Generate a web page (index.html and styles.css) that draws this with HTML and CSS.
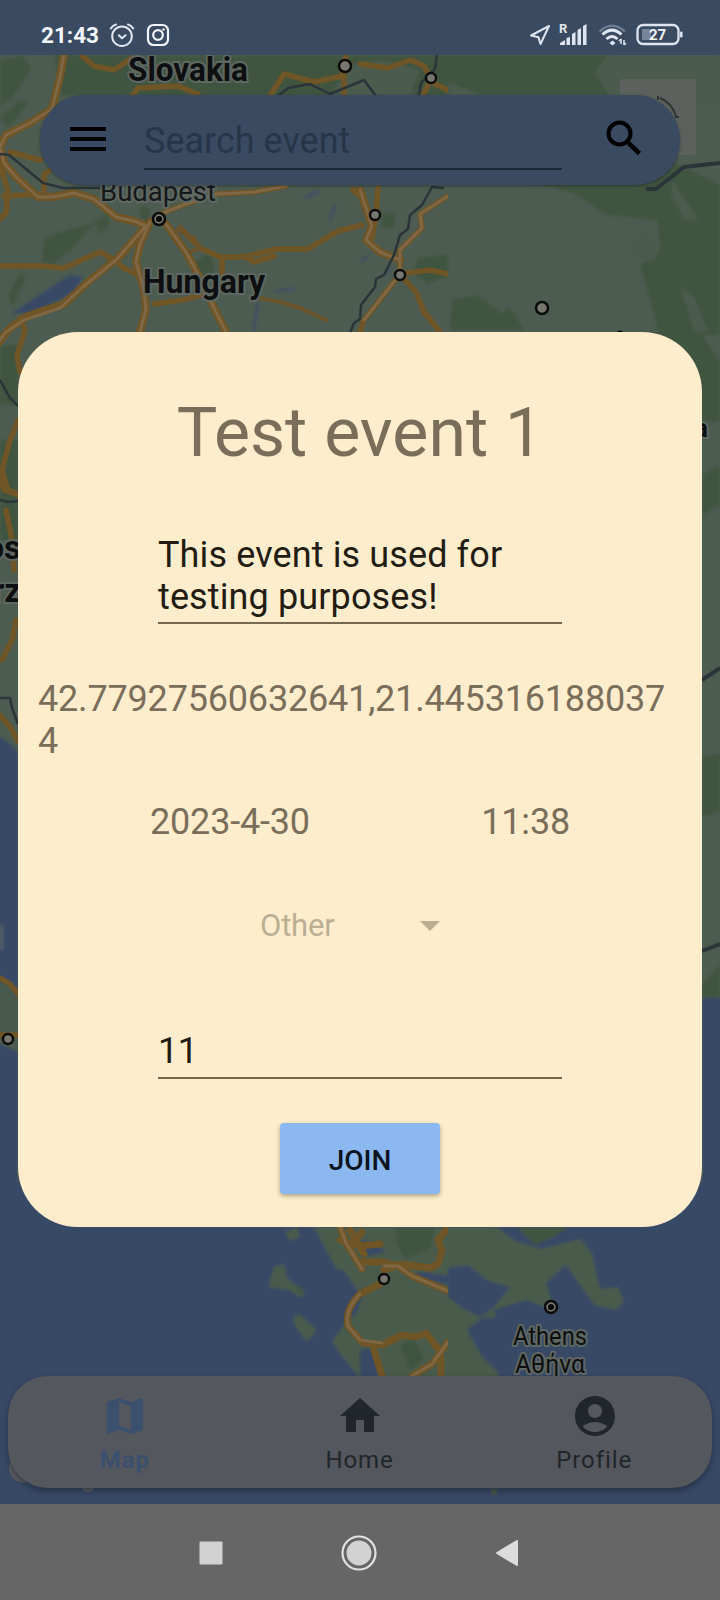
FILE: index.html
```html
<!DOCTYPE html>
<html lang="en">
<head>
<meta charset="utf-8">
<title>Event</title>
<link rel="stylesheet" href="styles.css">
</head>
<body>
<div class="screen">
  <header class="status">
    <span class="clock">21:43</span>
    <svg class="ic-alarm" width="26" height="26" viewBox="0 0 26 26" fill="none" stroke="#dfe5f0" stroke-width="2" stroke-linecap="round" stroke-linejoin="round"><circle cx="13" cy="14.2" r="9.8"/><path d="M9.8 13.2l3.2 3 3.6-3"/><path d="M1.8 6.5Q3.5 3.5 7 2.5M24.2 6.5Q22.500 3.500 19 2.500"/></svg>
    <svg class="ic-insta" width="24" height="24" viewBox="0 0 24 24" fill="none" stroke="#f1f4fa" stroke-width="2.200"><rect x="2" y="2" width="20" height="20" rx="5.500"/><circle cx="12" cy="12" r="4.800"/><circle cx="17.500" cy="6.500" r="1.200" fill="#f1f4fa" stroke="none"/></svg>
    <span class="spacer"></span>
    <svg class="ic-loc" width="22" height="22" viewBox="0 0 22 22" fill="none" stroke="#dfe5f0" stroke-width="2" stroke-linejoin="round"><path d="M20 2L2 11.500l7.500 1.700L11.500 20z"/></svg>
    <svg class="ic-signal" width="29" height="23" viewBox="0 0 29 23"><text x="0" y="10" class="roam">R</text><path fill="#dfe5f0" d="M1 22v-2l5-3v5zM7.500 22v-7l3.500-1v8zM13 22V11l3.500-2v13zM18.500 22V7l3.500-2v17zM24 22V3l3.500-2v21z"/></svg>
    <svg class="ic-wifi" width="29" height="24" viewBox="0 0 29 24" fill="none" stroke="#dfe5f0" stroke-width="3"><path d="M1.500 8.500Q14 -3 27 8.500" stroke="#6e7c93" stroke-width="2.500"/><path d="M4.500 11.500Q14 2.800 23.500 11.500M8.500 16Q14 11 19.500 16"/><path d="M14.500 17.500l3 2.500-3 2.500-3-2.500z" fill="#dfe5f0" stroke="none"/><path d="M23 16v5M26 17v5" stroke-width="1.500"/><path d="M21 18l2-2M26 22l2-2" stroke-width="1.500"/></svg>
    <svg class="ic-batt" width="47" height="23" viewBox="0 0 47 23"><rect x="1.500" y="2" width="41" height="19" rx="5.500" fill="none" stroke="#dfe5f0" stroke-width="2.300"/><rect x="6" y="6" width="9" height="11" fill="#77849a"/><rect x="44" y="8.500" width="2.500" height="6" rx="1" fill="#dfe5f0"/><text x="21.500" y="17" text-anchor="middle" class="pct">27</text></svg>
  </header>

  <main class="app">
    <svg class="map" viewBox="0 55 720 1449" width="720" height="1449">
      <defs>
        <clipPath id="detail"><rect x="0" y="55" width="448" height="1449"/></clipPath>
        <filter id="soft"><feGaussianBlur stdDeviation="1.600"/></filter>
        <filter id="haze"><feGaussianBlur stdDeviation=".6"/></filter>
      </defs>
      <rect y="55" width="720" height="1449" fill="#4c5c50"/>
      <g filter="url(#soft)">
        <g fill="#3f5441">
          <path d="M55 55h90l-8 40H60zM0 60l22-4 10 12-20 30-12 8zM0 118l20-18 8 4L8 128z"/>
          <path d="M130 55h470l20 0-25 18 18 20 30 12v25H90l30-25z"/>
          <path d="M520 180h80l60 -25 60 30v150h-60l-20-70 20-15-3-30-50-5-30-20-25-8z"/>
          <path d="M44 238l30-10 20-5 10-8-22 22-10 12-20 15-10-3z"/>
          <path d="M96 222l12-8 2 10-12 10zM140 205l10 4-2 14-8-6zM195 262l14-8 6 14-8 14-12-2zM382 212l14 2-3 15-12-2zM418 258l30-4v22l-20 8-14-10zM452 300l25-5 25 18 8-5 15 22h-75zM8 295l12-22 6 4-14 30z"/>
          <path d="M640 332h60l20 30v60h-20zM0 345h18v60H0zM0 440h18v100H0z"/>
          <path d="M702 756l18-2v58l-18 4zM702 985l18-20v35h-18zM702 475l18-10v40l-18 10z"/>
        </g>
        <g fill="#4c5c50">
          <path d="M595 73l12-18h113v52l-80 5-30-15zM448 82l35 14h-35zM672 180l20 30 8 12-15-2-14-25zM680 285l14 12 14 35h-14zM350 65l30-5 40 10-10 26h-80z"/>
          <path d="M630 235l20-8 8 12-2 20-18 5-10-15z"/>
        </g>
        <g fill="#384866">
          <path d="M12 313l58-38 13 2-10 16-24 12-20 8z"/>
          <path d="M-5 735q13 5 23 17v238l-23-15z"/>
          <path d="M-5 1042l23 10v130h684V998h24v520H-5z"/>
        </g>
        <path d="M305 198l14-7M330 220l5-14M275 291l20-2M253 332l5-30M360 262l8-6M384 274l8-6" stroke="#3a4a70" stroke-width="2" fill="none"/>
        <path d="M-5 975q15 5 23 18v58l-6-10-17-3z" fill="#47594d"/>
        <path d="M0 925h3v25H0z" fill="#59616a"/>

        <g fill="#4a5b4c">
          <path d="M314 1227l22 42 11 2 8-20-10-24z"/>
          <path d="M336 1227h160l44 22 40-10 12 14 8 36 18-2 6 14-8 9-22-5-14-20-14-20-20 18 10 30-2 28-14-15-18-10-40 2-15 12 14 25 18 18-4 16-20-6-14 14v12H370l2-16-18-22-16-20-6-10 14-18 12-12 4-14-18-26z"/>
          <path d="M268 1287l6-20 10-3 3 14 18 14-4 6-12-8zM285 1232l12-5 3 10-10 4zM293 1318l6-4 18 16-10 12-12-16z"/>
        </g>
        <g fill="#3f5441"><path d="M395 1227h40l-5 22-25 10-8-15zM515 1227h55l-20 12-15 6zM400 1345l14-6 10 20-14 10zM300 1285l4 10-8-4z"/></g>
        <g fill="#384866">
          <path d="M448 1268l20-3 20 16 22 6-16 20-14 10-16-8-16-12zM404 1276l20-4 24 4v8l-30-6z"/>
          <path d="M494 1310l32-10 26 10 16 18-40 30-14-12-14-14zM360 1350l12-2 10 30h-22zM360 1240l14 2 12 10-20 4zM497 1227h20l18 20-20-6z"/>
        </g>
      </g>

      <g clip-path="url(#detail)" filter="url(#haze)" fill="none" stroke-linejoin="round" stroke-linecap="round">
        <g stroke="#6f5425" stroke-width="8">
          <path d="M64 55l-4 22-8 32-22 14-24 12-6 12 4 16 12 14 22 20 14 0 22-4 20 6 22 18 18 4 12 5"/>
          <path d="M150 222l-30 34-32 26-24 22-36 12-18 12-14 18"/>
          <path d="M150 222l-10 22-4 18 8 28 2 20-6 22M166 224l20 28 14 26 14 30 14 28M360 190l12 36-6 14 14 12 20 8"/>
        </g>
        <g stroke="#6f5425" stroke-width="5.500">
          <path d="M160 214l26-10 30-10 38-2 32-6M0 266l40 0 24 2 22-10 14-6 14 8 10 8 20 10M154 304l28-4 24-6"/>
          <path d="M82 56l12 10 20 4 18-12M132 96l6-8 40-2 20 8M0 165l8 26-2 22-6 6M20 318l5 12-8 26 3 16M18 420l-8 20-8 30 6 20 10 4M0 470l4 20 14 5"/>
          <path d="M4 196l40-2 0-20 10-6M10 152l30 8M222 257v16M244 256l10 6 20-6M180 228l20 20 20 9 24 0 32-8 32 0 30-18 24-6M270 96l14-22 30 8 28-6 4-20M348 55M360 64l28 4 22-8 14 6 7 12M431 78l-8 18M431 82l17 8M344 96v-26M353 190l7 6M378 188l-2 28-4 22M448 196l-28 18 2 14-22 22 0 24M400 274l-36 46-4 12M400 274l16 18 8 20 16 20M400 274l30-4 18 4"/>
          <path d="M6 510l6 30 2 30M16 620l-4 20-10 20M0 715l10 12 8 14M0 978l10 6 8 10M0 1035h18"/>
        </g>
        <g stroke="#6a532a" stroke-width="4">
          <path d="M178 230l16 8 6 10-10 4M260 298l20 4 20 6 26 12"/>
        </g>
        <g stroke="#6f5425" stroke-width="7">
          <path d="M340 1227l6 16 16 26M340 1240l20 6 20-2M360 1262l24 0 14 4 14 10 36 15M384 1270l16-6 30 4 8-4 4-14-4-10 8-10M360 1294l20-10M360 1294q-16 16-12 32l12 14 4 3 18 2 20-10 14 2 10-4 12 16M448 1342l-16 22-20 12M374 1350l8 26M441 1358v18"/>
          <path d="M352 1246l10-14M350 1230l14 24"/>
        </g>
        <g stroke="#806745" stroke-width="3">
          <path d="M64 55l-4 22-8 32-22 14-24 12-6 12 4 16 12 14 22 20 14 0 22-4 20 6 22 18 18 4 12 5-30 34-32 26-24 22-36 12-18 12-14 18M150 222l-10 22-4 18 8 28 2 20-6 22M166 224l20 28 14 26 14 30 14 28M160 214l26-10 30-10 38-2 32-6"/>
          <path d="M360 190l12 36-6 14 14 12 20 8M448 196l-28 18 2 14-22 22 0 24M400 274l-36 46M340 1227l6 16 16 26M384 1266l14 0 14 10 36 15M360 1294q-16 16-12 32l12 14 22 3M448 1342l-16 22-20 12"/>
        </g>
      </g>
      <g fill="none" stroke="#2a3439" stroke-width="2.500" stroke-linejoin="round">
        <path d="M0 154l9 1 34 28 20 5h38M278 96l10-8 22-4 20 10 34-14 12 16M437 55l-2 14-14 14-2 12M444 188l-12-1-10 18-12 10-2 14-8 6-6 20-10 20-8 4-1 8-14 18-1 14-6 4-6 15M0 380l10 18 8 8M0 500l8 2 10-1M0 698l10 0 2 10 6 16"/>
        <path d="M646 189h10l28-22 36-4M702 680l18-12M702 951l18-7" stroke-width="4"/>
      </g>

      <g fill="#77766f" stroke="#0c0c0d" stroke-width="2.500">
        <circle cx="345" cy="66" r="6"/><circle cx="431" cy="78" r="5"/><circle cx="375" cy="215" r="5"/><circle cx="400" cy="275" r="5"/><circle cx="542" cy="308" r="6"/><circle cx="8" cy="1039" r="5"/><circle cx="384" cy="1279" r="5"/><circle cx="159" cy="219" r="6"/><circle cx="551" cy="1307" r="6"/>
      </g>
      <circle cx="159" cy="219" r="3" fill="#000"/><circle cx="551" cy="1307" r="3" fill="#000"/><circle cx="620" cy="334" r="3.500" fill="#000"/>

      <g class="place">
        <text x="128" y="81" textLength="120" lengthAdjust="spacingAndGlyphs" class="country">Slovakia</text>
        <text x="143" y="293" textLength="122" lengthAdjust="spacingAndGlyphs" class="country">Hungary</text>
        <text x="100" y="201" textLength="116" lengthAdjust="spacingAndGlyphs" class="city">Budapest</text>
        <text x="513" y="1345" textLength="74" lengthAdjust="spacingAndGlyphs" class="town">Athens</text>
        <text x="515" y="1373" textLength="70" lengthAdjust="spacingAndGlyphs" class="town">Αθήνα</text>
        <text x="21" y="559" text-anchor="end" class="country">os</text>
        <text x="21" y="602" text-anchor="end" class="country">rz</text>
        <text x="708" y="437" text-anchor="end" class="nation">a</text>
      </g>
      <rect x="620" y="79" width="76" height="76" rx="2" fill="#5d615e"/>
      <path d="M658 96v4M675 117h4M660 98q12 5 16 18" stroke="#2d3534" stroke-width="2" fill="none"/>
      <g fill="#5a5d61"><circle cx="24" cy="1468" r="15"/><circle cx="88" cy="1484" r="8"/></g>
      <path d="M490 1488h8l-2 7h-4z" fill="#475850"/>
    </svg>

    <div class="search">
      <svg class="ic-menu" width="36" height="24" viewBox="0 0 36 24"><path fill="#000" d="M0 0h36v4H0zM0 10h36v4H0zM0 20h36v4H0z"/></svg>
      <div class="query">Search event</div>
      <svg class="ic-search" width="36" height="36" viewBox="0 0 36 36" fill="none" stroke="#000"><circle cx="13.500" cy="13.500" r="11" stroke-width="4"/><path d="M22.500 23l11 10.500" stroke-width="4.500"/></svg>
    </div>

    <section class="dialog">
      <h1 class="title">Test event 1</h1>
      <div class="field about">This event is used for testing purposes!</div>
      <p class="coords">42.77927560632641,21.4453161880374</p>
      <div class="when"><span class="date">2023-4-30</span><span class="time">11:38</span></div>
      <div class="category"><span>Other</span><i class="caret"></i></div>
      <div class="field count">11</div>
      <button class="join">JOIN</button>
    </section>

    <nav class="tabs">
      <a class="tab active"><svg width="48" height="48" viewBox="0 0 24 24"><path fill="currentColor" d="M20.500 3l-.16.030L15 5.100 9 3 3.360 4.900c-.21.070-.36.250-.36.480V20.500c0 .28.220.5.500.5l.16-.030L9 18.900l6 2.100 5.640-1.900c.21-.070.360-.25.360-.48V3.500c0-.28-.22-.5-.5-.5zM15 19l-6-2.110V5l6 2.110V19z"/></svg><span>Map</span></a>
      <a class="tab"><svg width="48" height="48" viewBox="0 0 24 24"><path fill="currentColor" d="M10 20v-6h4v6h5v-8h3L12 3 2 12h3v8z"/></svg><span>Home</span></a>
      <a class="tab"><svg width="48" height="48" viewBox="0 0 24 24"><path fill="currentColor" d="M12 2C6.480 2 2 6.480 2 12s4.480 10 10 10 10-4.480 10-10S17.520 2 12 2zm0 4c1.930 0 3.500 1.570 3.500 3.500S13.930 13 12 13s-3.500-1.570-3.500-3.500S10.070 6 12 6zm0 14c-2.030 0-4.430-.82-6.140-2.880C7.550 15.800 9.680 15 12 15s4.450.8 6.140 2.120C16.430 19.180 14.030 20 12 20z"/></svg><span>Profile</span></a>
    </nav>
  </main>

  <footer class="sysnav">
    <svg width="24" height="24" viewBox="0 0 24 24"><rect x=".5" y=".5" width="23" height="23" rx="1" fill="#d2d2d2"/></svg>
    <svg width="36" height="36" viewBox="0 0 36 36"><circle cx="18" cy="18" r="16.500" fill="none" stroke="#e2e2e2" stroke-width="2.200"/><circle cx="18" cy="18" r="12.500" fill="#d2d2d2"/></svg>
    <svg width="24" height="28" viewBox="0 0 24 28"><path d="M22 2v24L2 14z" fill="#dcdcdc" stroke="#dcdcdc" stroke-width="2" stroke-linejoin="round"/></svg>
  </footer>
</div>
</body>
</html>
```
FILE: styles.css
```css
* { box-sizing: border-box; }
body { margin: 0; font-family: Roboto, "Noto Sans", sans-serif; }
.screen { width: 720px; height: 1600px; display: flex; flex-direction: column; overflow: hidden; }

.status { height: 55px; flex: none; background: #3a4a61; display: flex; align-items: center; padding: 14px 37px 0 41px; }
.status svg { overflow: visible; }
.clock { font-size: 22.500px; font-weight: 700; color: #f4f7fc; width: 58px; white-space: nowrap; }
.ic-alarm { margin-left: 10px; }
.ic-insta { margin-left: 11px; }
.spacer { flex: 1; }
.ic-signal { margin-left: 8px; }
.ic-wifi { margin-left: 10px; }
.ic-batt { margin-left: 9px; }
.roam { font-size: 13px; font-weight: 700; fill: #dfe5f0; }
.pct { font-size: 15px; font-weight: 700; fill: #f1f4fa; }

.app { position: relative; height: 1449px; flex: none; display: flex; flex-direction: column; align-items: center; padding: 40px 8px 16px; }
.map { position: absolute; inset: 0; }
.place text { paint-order: stroke; stroke: #5f6862; stroke-width: 4px; stroke-linejoin: round; fill: #0d0f10; }
.place .country { font-size: 33px; font-weight: 700; }
.place .nation { font-size: 26px; font-weight: 700; }
.place .city { font-size: 27px; fill: #15191b; }
.place .town { font-size: 26px; }

.search { position: relative; width: 640px; height: 90px; flex: none; display: flex; align-items: center; padding: 0 38px 0 30px; border-radius: 45px; background: #3a4a61; box-shadow: 0 1px 3px rgba(20, 30, 30, .5); }
.ic-menu { margin-top: -2px; }
.query { width: 418px; height: 48px; margin: 12px 0 0 38px; font-size: 36px; line-height: 39px; color: #263648; border-bottom: 2px solid #1a2a37; }
.ic-search { margin-left: auto; margin-top: -5px; }

.dialog { position: relative; width: 684px; height: 895px; flex: none; margin-top: 147px; padding: 61px 20px 0; border-radius: 60px; background: #fdedcc; color: #7a6e5b; font-size: 36px; line-height: 42px; display: flex; flex-direction: column; align-items: center; }
.title { margin: 0; font-size: 68px; line-height: 80px; font-weight: 400; }
.field { width: 404px; color: #221c12; border-bottom: 2px solid #77694f; }
.about { height: 90px; margin-top: 61px; letter-spacing: .12px; }
.coords { align-self: stretch; margin: 54px -10px 0 0; word-break: break-all; letter-spacing: -.18px; width: 640px; }
.when { width: 100%; margin-top: 39px; display: flex; justify-content: space-between; padding: 0 112px; letter-spacing: -.18px; }
.category { width: 180px; margin-top: 65px; margin-right: 20px; display: flex; align-items: center; justify-content: space-between; font-size: 31px; line-height: 36px; letter-spacing: -.2px; color: #bbae93; }
.caret { border: 10px solid transparent; border-top-color: #bbae93; border-bottom: 0; }
.count { height: 49px; margin-top: 86px; letter-spacing: -.4px; }
.join { width: 160px; height: 71px; flex: none; margin-top: 44px; padding: 4px 0 0; border: 0; border-radius: 4px; background: #8bb8f0; color: #0c1420; font: 500 28px Roboto, sans-serif; box-shadow: 0 2px 4px rgba(80, 70, 50, .45); }

.tabs { position: relative; width: 704px; height: 112px; flex: none; margin-top: 149px; border-radius: 40px; background: #54575d; box-shadow: 0 3px 6px rgba(20, 28, 40, .5); display: flex; }
.tab { flex: 1; display: flex; flex-direction: column; align-items: center; padding-top: 16px; color: #20262a; font-size: 24px; line-height: 28px; letter-spacing: .9px; }
.tab span { margin: 6px 1px 0 0; }
.active { color: #3a506e; font-weight: 700; }

.sysnav { height: 96px; flex: none; background: #666; display: flex; align-items: center; justify-content: center; gap: 118px; padding: 1px 2px 0 0; }
```
